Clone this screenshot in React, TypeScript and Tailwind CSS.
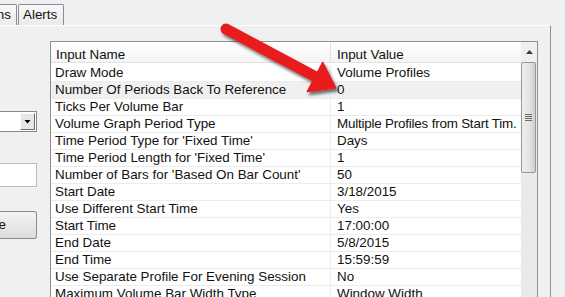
import React from "react";

const rows: [string, string][] = [
  ["Draw Mode", "Volume Profiles"],
  ["Number Of Periods Back To Reference", "0"],
  ["Ticks Per Volume Bar", "1"],
  ["Volume Graph Period Type", "Multiple Profiles from Start Tim."],
  ["Time Period Type for 'Fixed Time'", "Days"],
  ["Time Period Length for 'Fixed Time'", "1"],
  ["Number of Bars for 'Based On Bar Count'", "50"],
  ["Start Date", "3/18/2015"],
  ["Use Different Start Time", "Yes"],
  ["Start Time", "17:00:00"],
  ["End Date", "5/8/2015"],
  ["End Time", "15:59:59"],
  ["Use Separate Profile For Evening Session", "No"],
  ["Maximum Volume Bar Width Type", "Window Width"],
];

export default function App() {
  return (
    <div className="relative flex w-[566px] h-[297px] overflow-hidden bg-[#f0f0f0] text-[13.4px] leading-[16px] text-[#111111] font-['Liberation_Sans',Arial,sans-serif]">
      <div className="w-[551px] shrink-0 flex flex-col">
        {/* tab strip */}
        <div className="h-[25px] shrink-0 flex items-end">
          <div className="w-[17px] h-[21px] shrink-0 flex justify-end whitespace-nowrap border-t border-r border-[#8c8e94] rounded-tr-[2px] bg-gradient-to-b from-[#f8f8f8] to-[#ebebeb] pr-[5px] pt-[2px]">
            ns
          </div>
          <div className="ml-[1px] w-[46px] h-[21px] shrink-0 whitespace-nowrap border-t border-x border-[#8c8e94] rounded-t-[2px] bg-gradient-to-b from-[#f8f8f8] to-[#ebebeb] pl-[4px] pt-[2px]">
            Alerts
          </div>
        </div>
        {/* tab page */}
        <div className="flex-1 min-h-0 flex border-t border-t-white border-r border-r-[#8f8f8f] pt-[15px] overflow-hidden">
          {/* left controls (cut off) */}
          <div className="w-[37px] shrink-0 flex flex-col">
            <div className="mt-[70px] h-[21px] flex justify-end border border-l-0 border-[#8a8a8a] bg-white p-[1px]">
              <div className="w-[15px] flex items-center justify-center border border-t-white border-l-white border-r-[#6f6f6f] border-b-[#6f6f6f] bg-[#e6e6e6]">
                <svg width="7" height="4" viewBox="0 0 7 4">
                  <polygon points="0.5,0 6.5,0 3.5,3.5" fill="#000" />
                </svg>
              </div>
            </div>
            <div className="mt-[31px] h-[24px] border border-l-0 border-[#bdbdbd] bg-white" />
            <div className="mt-[24px] h-[28px] flex items-center justify-end whitespace-nowrap border border-l-0 border-[#8a8a8a] rounded-r-[3px] bg-gradient-to-b from-[#f3f3f3] to-[#dddddd] pr-[30px]">
              e
            </div>
          </div>
          {/* list view */}
          <div className="ml-[13px] w-[488px] h-[300px] shrink-0 flex border border-[#8f8f8f] bg-white">
            <div className="w-[470px] shrink-0 flex flex-col">
              <div className="h-[21px] shrink-0 flex border-b border-[#e2e2e2] bg-gradient-to-b from-white to-[#f5f5f5]">
                <div className="w-[280px] shrink-0 border-r border-[#e2e2e2] pl-[5px] pt-[5px]">Input Name</div>
                <div className="flex-1 pl-[6px] pt-[5px]">Input Value</div>
              </div>
              <div className="pt-[2px]">
                {rows.map(([name, value], i) => (
                  <div
                    key={name}
                    className={
                      i === 1
                        ? "h-[17px] flex border-b border-[#ececec] bg-[#f0f0f0]"
                        : "h-[17px] flex border-b border-[#ececec]"
                    }
                  >
                    <div className="w-[280px] shrink-0 border-r border-[#ececec] pl-[4px] whitespace-nowrap overflow-hidden">
                      {name}
                    </div>
                    <div
                      className={
                        i === 3
                          ? "flex-1 min-w-0 pl-[6px] whitespace-nowrap overflow-hidden tracking-[-0.2px]"
                          : "flex-1 min-w-0 pl-[6px] whitespace-nowrap overflow-hidden"
                      }
                    >
                      {value}
                    </div>
                  </div>
                ))}
              </div>
            </div>
            {/* scrollbar */}
            <div className="w-[16px] shrink-0 flex flex-col bg-[#eaeaea]">
              <div className="h-[20px] shrink-0 flex items-center justify-center bg-[#efefef]">
                <svg width="7" height="4" viewBox="0 0 7 4">
                  <polygon points="0,4 7,4 3.5,0" fill="#3c3c3c" />
                </svg>
              </div>
              <div className="w-[15px] h-[111px] shrink-0 flex flex-col items-center justify-center gap-[1px] border border-[#979797] rounded-[2px] bg-gradient-to-r from-[#eeeeee] via-[#e6e6e6] to-[#cfcfcf]">
                <div className="w-[7px] h-[1px] bg-[#6a6a6a]" />
                <div className="w-[7px] h-[1px] bg-[#6a6a6a]" />
                <div className="w-[7px] h-[1px] bg-[#6a6a6a]" />
                <div className="w-[7px] h-[1px] bg-[#6a6a6a]" />
              </div>
            </div>
          </div>
        </div>
      </div>
      <div className="w-[15px] shrink-0 border-r border-[#d0d0d0]" />

      {/* red annotation arrow */}
      <svg className="absolute left-0 top-0 pointer-events-none" width="566" height="297" viewBox="0 0 566 297">
        <defs>
          <filter id="arrowShadow" x="-20%" y="-40%" width="140%" height="180%">
            <feDropShadow dx="2" dy="3" stdDeviation="1.6" floodColor="#000" floodOpacity="0.55" />
          </filter>
        </defs>
        <g filter="url(#arrowShadow)">
          <line x1="226" y1="29" x2="316" y2="77" stroke="#e81b1b" strokeWidth="11" strokeLinecap="round" />
          <polygon points="336,88 322.7,61.8 306.9,91.8" fill="#e81b1b" stroke="#e81b1b" strokeWidth="1" strokeLinejoin="round" />
        </g>
      </svg>
    </div>
  );
}
